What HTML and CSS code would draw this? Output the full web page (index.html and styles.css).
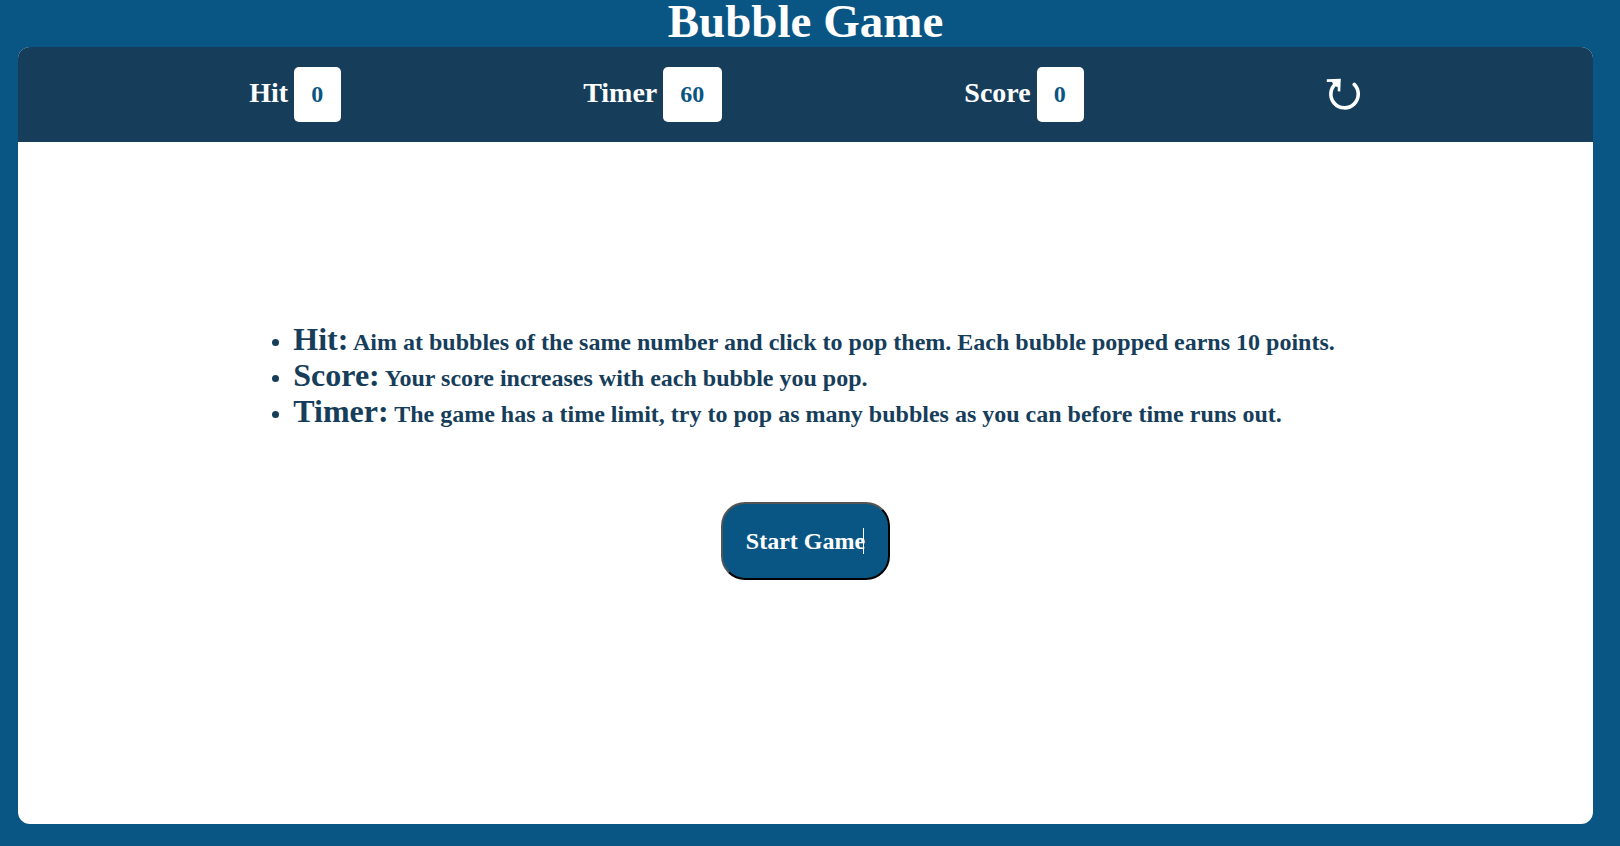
FILE: index.html
```html
<!DOCTYPE html>
<html lang="en">
<head>
<meta charset="utf-8">
<title>Bubble Game</title>
<link rel="stylesheet" href="styles.css">
</head>
<body>
<h1 class="title">Bubble Game</h1>
<main class="panel">
  <header class="bar">
    <h2 class="stat">Hit <span class="box">0</span></h2>
    <h2 class="stat">Timer <span class="box">60</span></h2>
    <h2 class="stat">Score <span class="box">0</span></h2>
    <button class="restart" type="button" aria-label="Restart">
      <svg width="36" height="34" viewBox="0 0 36 34" fill="none" stroke="currentColor">
        <path d="M9.8 5.6A13.7 13.7 0 1 0 28.2 6.4" stroke-width="3.6" stroke-linecap="round"/>
        <path d="M0.8 2.6L13.4 2.2L13 13.4" stroke-width="2.6"/>
        <path d="M5 2.6L14.4 1L13.4 10L8 7.6Z" fill="currentColor" stroke="none"/>
      </svg>
    </button>
  </header>
  <section class="content">
    <ul class="rules">
      <li><strong class="term">Hit:</strong> Aim at bubbles of the same number and click to pop them. Each bubble popped earns 10 points.</li>
      <li><strong class="term">Score:</strong> Your score increases with each bubble you pop.</li>
      <li><strong class="term">Timer:</strong> The game has a time limit, try to pop as many bubbles as you can before time runs out.</li>
    </ul>
    <button class="start" type="button"><span class="label">Start Game<span class="caret"></span></span></button>
  </section>
</main>
</body>
</html>
```
FILE: styles.css
```css
* {
  margin: 0;
  padding: 0;
  box-sizing: border-box;
}

body {
  display: flex;
  flex-direction: column;
  min-height: 100vh;
  padding: 0 27px 22px 18px;
  background: #095684;
  font-family: "Liberation Serif", "Times New Roman", serif;
}

.title {
  color: #fff;
  font-size: 47px;
  line-height: 42px;
  padding-bottom: 5px;
  text-align: center;
}

.panel {
  display: flex;
  flex: 1;
  flex-direction: column;
  overflow: hidden;
  border-radius: 12px;
  background: #fff;
}

.bar {
  display: flex;
  align-items: center;
  justify-content: space-around;
  padding: 20px 7%;
  background: #163e5b;
  color: #fff;
}

.stat {
  display: flex;
  align-items: baseline;
  gap: 6px;
  font-size: 28px;
}

.box {
  padding: 14px 18px 14px 17px;
  border-radius: 5px;
  background: #fff;
  color: #095684;
  font-size: 24px;
  font-weight: 600;
  line-height: 27px;
}

.restart {
  display: flex;
  border: 0;
  background: none;
  color: #fff;
}

.content {
  display: flex;
  flex: 1;
  flex-direction: column;
  align-items: center;
  justify-content: center;
  gap: 70px;
  padding-bottom: 62px;
}

.rules {
  width: 70%;
  padding-left: 39px;
  color: #163e5b;
  font-size: 24px;
  font-weight: 600;
  line-height: 36px;
}

.term {
  font-size: 32px;
  line-height: 30px;
}

.start {
  padding: 23px;
  border: 2px outset #000;
  border-radius: 24px;
  background: #095684;
  color: #fff;
  font: bold 24px/28px "Liberation Serif", "Times New Roman", serif;
}

.label {
  position: relative;
}

.caret {
  position: absolute;
  top: 0;
  right: 1px;
  width: 1px;
  height: 26px;
  background: #fff;
}
```
